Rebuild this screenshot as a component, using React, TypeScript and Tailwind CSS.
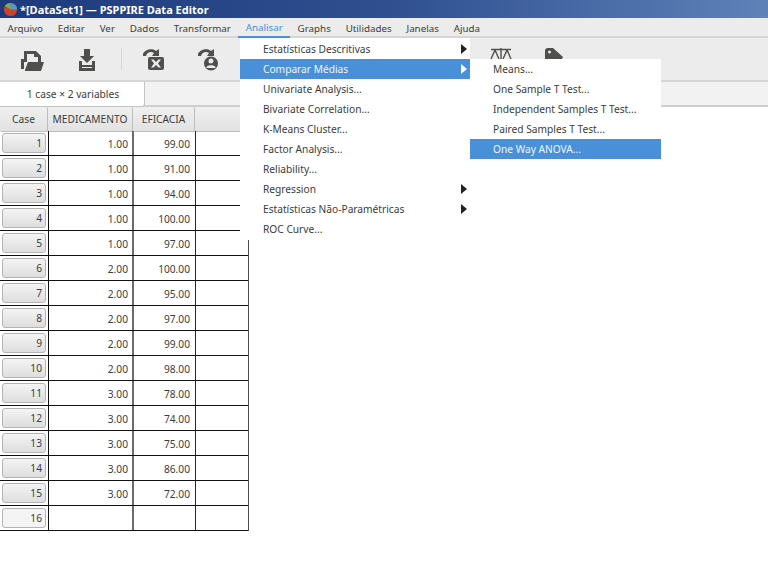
import type { ReactNode } from 'react'

const MENUS = ['Arquivo', 'Editar', 'Ver', 'Dados', 'Transformar', 'Analisar', 'Graphs', 'Utilidades', 'Janelas', 'Ajuda']

const ROWS: [string, string][] = [
  ['1.00', '99.00'],
  ['1.00', '91.00'],
  ['1.00', '94.00'],
  ['1.00', '100.00'],
  ['1.00', '97.00'],
  ['2.00', '100.00'],
  ['2.00', '95.00'],
  ['2.00', '97.00'],
  ['2.00', '99.00'],
  ['2.00', '98.00'],
  ['3.00', '78.00'],
  ['3.00', '74.00'],
  ['3.00', '75.00'],
  ['3.00', '86.00'],
  ['3.00', '72.00'],
  ['', ''],
]

const ANALYZE: { label: string; sub?: boolean; active?: boolean }[] = [
  { label: 'Estatísticas Descritivas', sub: true },
  { label: 'Comparar Médias', sub: true, active: true },
  { label: 'Univariate Analysis...' },
  { label: 'Bivariate Correlation...' },
  { label: 'K-Means Cluster...' },
  { label: 'Factor Analysis...' },
  { label: 'Reliability...' },
  { label: 'Regression', sub: true },
  { label: 'Estatísticas Não-Paramétricas', sub: true },
  { label: 'ROC Curve...' },
]

const COMPARE = ['Means...', 'One Sample T Test...', 'Independent Samples T Test...', 'Paired Samples T Test...', 'One Way ANOVA...']

function ToolIcon({ children, className }: { children: ReactNode; className: string }) {
  return (
    <svg viewBox="0 0 24 24" width="24" height="24" fill="#4f4f4d" className={className}>
      {children}
    </svg>
  )
}

function Arrow({ color }: { color: string }) {
  return (
    <svg width="6" height="10" viewBox="0 0 6 10" className="absolute right-[3px] top-[5px]">
      <path d="M0 0 L6 5 L0 10 Z" fill={color} />
    </svg>
  )
}

function RedoBase() {
  return <path d="M2 6 C4 1 12 0 15 3 L18 1 L18 8 L11 8 L13 5 C10 3 6 4 5 8 L2 8 Z" />
}

function HeaderCell({ children, className, last }: { children?: ReactNode; className: string; last?: boolean }) {
  return (
    <div
      className={`flex h-[25px] items-center justify-center rounded-[2px] border-b border-[#bdbdbd] bg-gradient-to-b from-[#f0f0f0] to-[#e2e2e2] pt-[2px] ${
        last ? 'border-r border-[#4c4c4c]' : 'border-r border-[#222222]'
      } ${className}`}
    >
      {children}
    </div>
  )
}

export default function App() {
  return (
    <div className="relative h-[576px] w-[768px] overflow-hidden bg-white font-['Noto_Sans',sans-serif] text-[10.2px] text-[#3c3c3c]">
      <div className="flex h-[18px] items-center bg-gradient-to-r from-[#1d3a7d] via-[#2f4f8f] to-[#5f82b9] pl-[3px]">
        <svg width="15" height="15" viewBox="0 0 16 16">
          <circle cx="8" cy="8" r="7" fill="#c8442c" />
          <path d="M8 8 L8 1 A7 7 0 0 1 15 8 Z" fill="#4f9bd0" />
          <path d="M8 8 L2 4 A7 7 0 0 1 8 1 Z" fill="#6fb35a" />
        </svg>
        <span className="ml-[2px] text-[11px] font-bold leading-none text-white">*[DataSet1] — PSPPIRE Data Editor</span>
      </div>

      <div className="flex h-[20px] border-b-2 border-[#d6d6d6] bg-[#ececec] text-[9.8px]">
        {MENUS.map((m) => (
          <div
            key={m}
            className={
              m === 'Analisar'
                ? 'mb-[-2px] flex h-[20px] items-center border-b-2 border-[#4a90d9] px-[7.4px] pt-[2px] text-[#4a90d9]'
                : 'mb-[-2px] flex h-[20px] items-center px-[7.4px] pt-[2px]'
            }
          >
            {m}
          </div>
        ))}
      </div>

      <div className="flex h-[44px] items-start border-b-2 border-[#d6d6d6] bg-[#ececec] pl-[20px] pt-[10px]">
        <ToolIcon className="">
          <path d="M1 11 L4 11 L4 3 L16 3 L21 8 L21 14 L18 14 L18 9 L14 9 L14 6 L7 6 L7 14 L4 14 L4 21 L1 21 Z" />
          <path d="M5 22 L8 14 L24 14 L21 23 L5 23 Z" />
        </ToolIcon>
        <ToolIcon className="ml-[31px]">
          <path d="M9 1 L15 1 L15 8 L19 8 L12 15 L5 8 L9 8 Z" />
          <path d="M4 13 L7 13 L7 17 L17 17 L17 13 L20 13 L20 23 L4 23 Z M7 19 L7 20 L17 20 L17 19 Z" fillRule="evenodd" />
        </ToolIcon>
        <div className="ml-[22px] h-[22px] w-px bg-[#d8d8d8]" />
        <ToolIcon className="ml-[19px]">
          <RedoBase />
          <path d="M9 9 L21 9 Q23 9 23 11 L23 20 Q23 22 21 22 L9 22 Q7 22 7 20 L7 11 Q7 9 9 9 Z M10 11.5 L13 15.5 L10 19.5 L12.5 19.5 L15 17 L17.5 19.5 L20 19.5 L17 15.5 L20 11.5 L17.5 11.5 L15 14 L12.5 11.5 Z" fillRule="evenodd" />
        </ToolIcon>
        <ToolIcon className="ml-[31px]">
          <RedoBase />
          <path d="M15 8.5 A7 7 0 1 0 15.01 22.5 A7 7 0 1 0 15 8.5 Z M15 10.5 A2.5 2.5 0 1 1 14.99 15.5 A2.5 2.5 0 1 1 15 10.5 Z M10.5 19 C12 16.5 18 16.5 19.5 19 L19.5 20 L10.5 20 Z" fillRule="evenodd" />
        </ToolIcon>
      </div>

      <div className="flex h-[25px] border-b-2 border-[#cfcfcf] bg-[#f2f2f2]">
        <div className="flex h-[25px] w-[145px] items-center justify-center rounded-br-[3px] border-r border-b border-[#c4c4c4] bg-white pl-[2px] pt-[2px]">
          1 case × 2 variables
        </div>
      </div>

      <div className="flex h-[24px] w-[249px] bg-[#ececec]">
        <HeaderCell className="w-[48px]">Case</HeaderCell>
        <HeaderCell className="w-[85px]">MEDICAMENTO</HeaderCell>
        <HeaderCell className="w-[62px]">EFICACIA</HeaderCell>
        <HeaderCell className="w-[53px]" last />
      </div>

      <div className="w-[249px] border-r border-[#4c4c4c]">
        {ROWS.map(([med, ef], i) => (
          <div key={i} className="flex h-[25px] border-b border-[#111111]">
            <div className="w-[49px] border-r border-[#111111] pl-[2px] pt-[2px]">
              <div
                className={
                  i === 15
                    ? 'flex h-[20px] w-[44px] items-center justify-end rounded-[3px] border border-[#b4b4b4] bg-[#f4f4f4] pr-[3px] pt-[2px]'
                    : 'flex h-[20px] w-[44px] items-center justify-end rounded-[3px] border border-[#b4b4b4] bg-gradient-to-b from-[#f4f4f4] to-[#dedede] pr-[3px] pt-[2px]'
                }
              >
                {i + 1}
              </div>
            </div>
            <div className="flex w-[85px] items-center justify-end border-r-2 border-[#6c6c6c] pr-[4px] pt-[3px]">{med}</div>
            <div className="flex w-[62px] items-center justify-end border-r border-[#2a2a2a] pr-[5px] pt-[3px]">{ef}</div>
            <div className="flex-1" />
          </div>
        ))}
      </div>

      <div className="absolute left-[240px] top-[38px] w-[230px] bg-white py-[1px]">
        {ANALYZE.map((it) => (
          <div
            key={it.label}
            className={
              it.active
                ? 'relative flex h-[20px] items-center bg-[#4a90d9] pl-[23px] pt-[2px] text-[#eef4fb]'
                : 'relative flex h-[20px] items-center pl-[23px] pt-[2px]'
            }
          >
            {it.label}
            {it.sub && <Arrow color={it.active ? '#ffffff' : '#222222'} />}
          </div>
        ))}
      </div>

      <div className="absolute left-[470px] top-[59px] w-[191px] bg-white">
        {COMPARE.map((c, i) => (
          <div
            key={c}
            className={
              i === 4
                ? 'flex h-[20px] items-center bg-[#4a90d9] pl-[23px] pt-[2px] text-[#eef4fb]'
                : 'flex h-[20px] items-center pl-[23px] pt-[2px]'
            }
          >
            {c}
          </div>
        ))}
      </div>

      <svg width="24" height="11" viewBox="0 0 24 11" className="absolute left-[489px] top-[48px]" fill="none" stroke="#4f4f4d">
        <path d="M2 1.5 L22 1.5 M12 0 L12 11 M6 2 L2 11 M6 2 L10 11 M18 2 L14 11 M18 2 L22 11" strokeWidth="1.4" />
      </svg>
      <svg width="20" height="11" viewBox="0 0 20 11" className="absolute left-[544px] top-[48px]">
        <path d="M1 3 Q1 0 4 0 L9 0 L19 9 L18 11 L1 11 Z" fill="#4f4f4d" />
        <circle cx="5.5" cy="4" r="1.5" fill="#ececec" />
      </svg>
    </div>
  )
}
